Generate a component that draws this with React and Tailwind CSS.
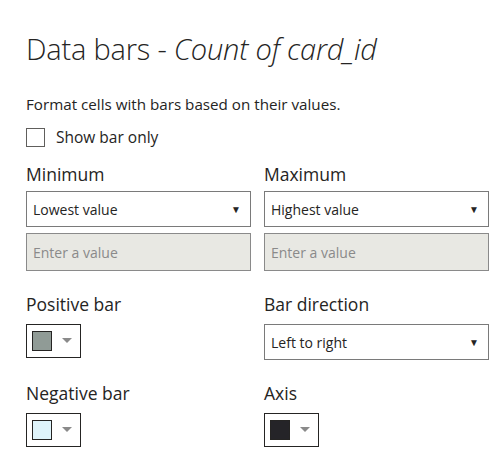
import React from 'react';

function Select({ value }) {
    return (
        <div className="flex items-center justify-between h-[36px] border border-[#7a7a7a] bg-white pl-[6px] pr-[9px]">
            <span className="text-[14px] text-[#252423]">{value}</span>
            <span className="text-[10px] text-[#252423]">▼</span>
        </div>
    );
}

function ValueInput() {
    return (
        <div className="flex items-center h-[38px] mt-[6px] border border-[#8a8a8a] bg-[#e8e8e3] px-[6px]">
            <span className="text-[14px] text-[#8a8a8a]">Enter a value</span>
        </div>
    );
}

function ColorPicker({ color }) {
    return (
        <div className="flex items-center w-[55px] h-[34px] border border-[#252423] bg-white pl-[5px] gap-[10px]">
            <div className="w-[20px] h-[20px] border border-[#252423]" style={{ backgroundColor: color }} />
            <svg width="10" height="6" viewBox="0 0 10 6">
                <path d="M0 0h10L5 5z" fill="#8a8a8a" />
            </svg>
        </div>
    );
}

export default function App() {
    return (
        <div className="w-[495px] h-[463px] bg-white text-[#252423] pl-[26px] pr-[6px] overflow-hidden" style={{ fontFamily: '"Open Sans", "Noto Sans", sans-serif' }}>
            <h1 className="pt-[29px] text-[29px] font-light leading-[40px] tracking-[-0.2px]">
                Data bars - <span className="italic">Count of card_id</span>
            </h1>

            <p className="mt-[25px] text-[15.2px] leading-[20px]">Format cells with bars based on their values.</p>

            <label className="flex items-center gap-[11px] mt-[12px]">
                <span className="w-[19px] h-[19px] border border-[#605e5c] bg-white" />
                <span className="text-[15.5px]">Show bar only</span>
            </label>

            <div className="grid grid-cols-[225px_225px] gap-x-[13px] mt-[13px]">
                <div>
                    <div className="text-[17.5px] leading-[24px]">Minimum</div>
                    <div className="mt-[5px]"><Select value="Lowest value" /></div>
                    <ValueInput />
                </div>
                <div>
                    <div className="text-[17.5px] leading-[24px]">Maximum</div>
                    <div className="mt-[5px]"><Select value="Highest value" /></div>
                    <ValueInput />
                </div>

                <div className="mt-[21px]">
                    <div className="text-[17.5px] leading-[24px]">Positive bar</div>
                    <div className="mt-[8px]"><ColorPicker color="#909b96" /></div>
                </div>
                <div className="mt-[21px]">
                    <div className="text-[17.5px] leading-[24px]">Bar direction</div>
                    <div className="mt-[8px]"><Select value="Left to right" /></div>
                </div>

                <div className="mt-[21px]">
                    <div className="text-[17.5px] leading-[24px]">Negative bar</div>
                    <div className="mt-[8px]"><ColorPicker color="#dff4fb" /></div>
                </div>
                <div className="mt-[21px]">
                    <div className="text-[17.5px] leading-[24px]">Axis</div>
                    <div className="mt-[8px]"><ColorPicker color="#252428" /></div>
                </div>
            </div>
        </div>
    );
}
